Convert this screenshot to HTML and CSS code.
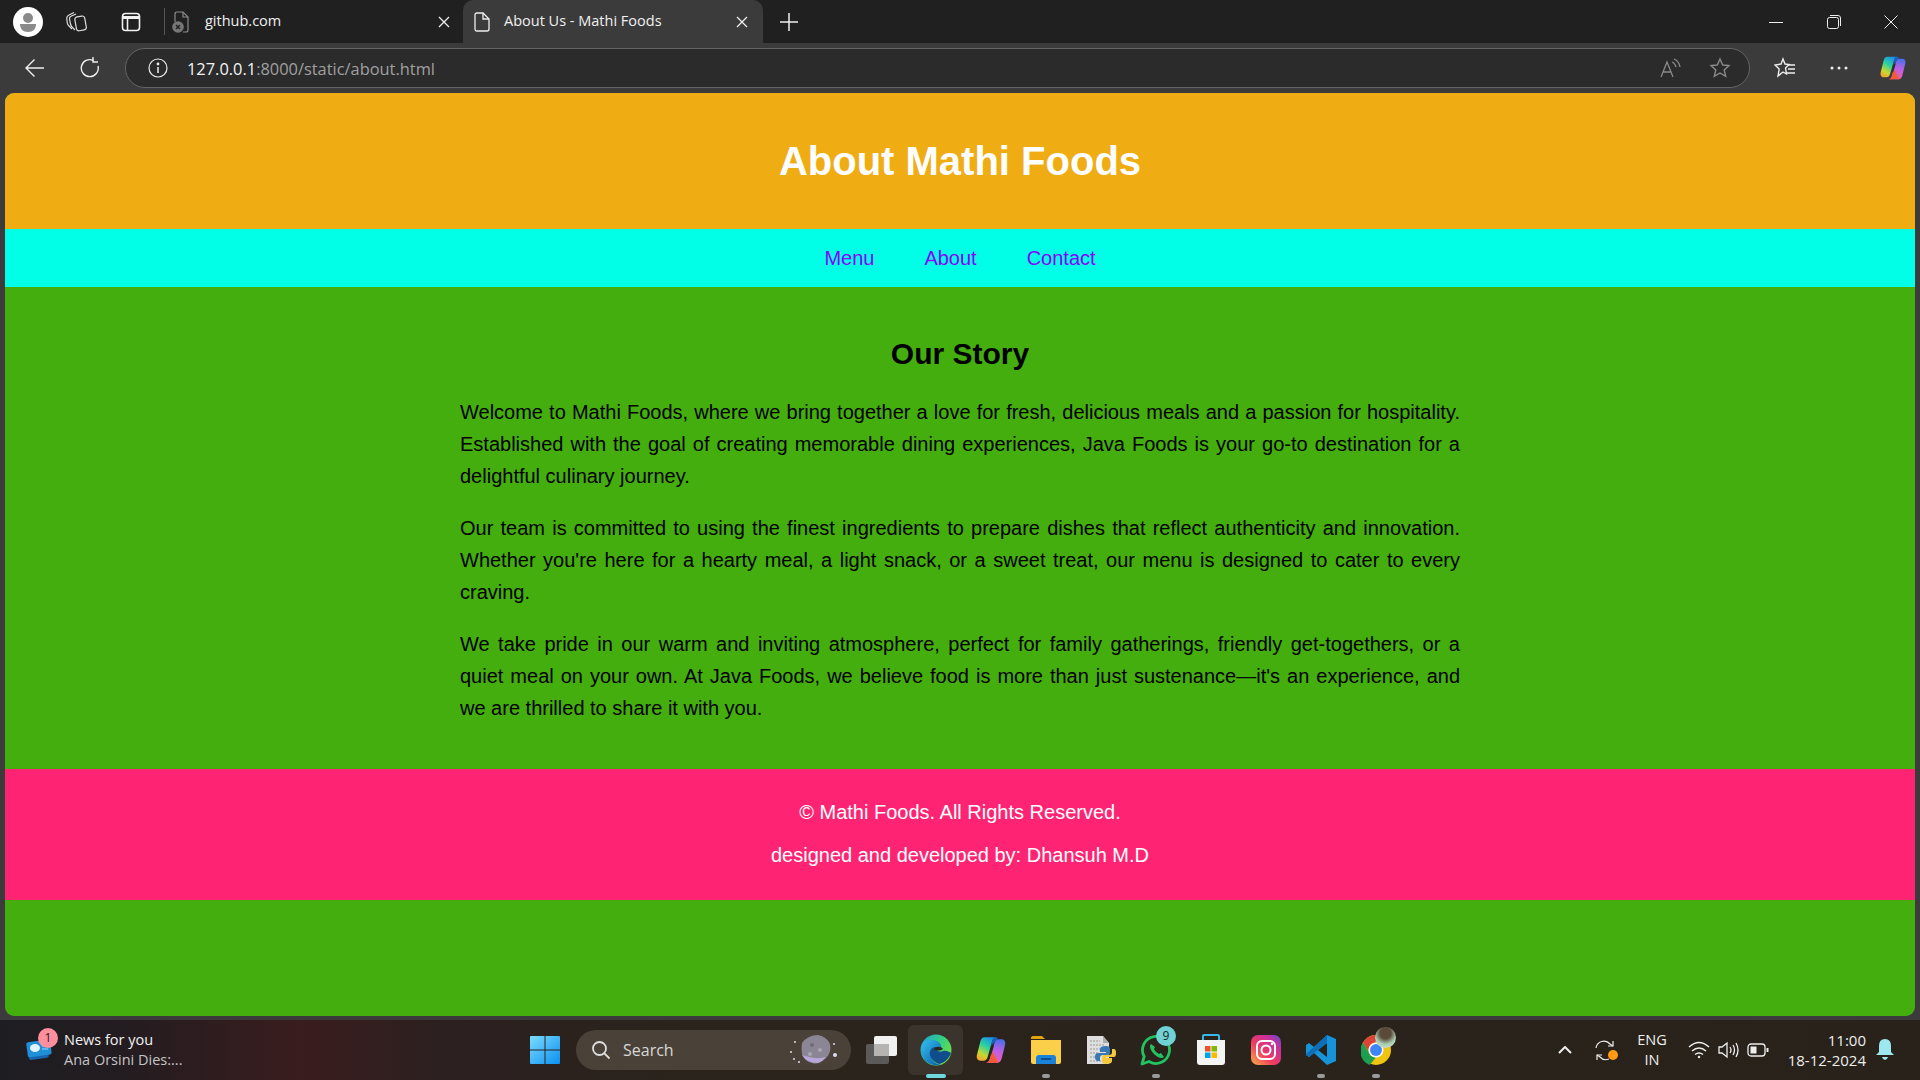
FILE: index.html
```html
<!DOCTYPE html>
<html>
<head>
    <title>About Us - Mathi Foods</title>
    <link rel="stylesheet" href="styles.css">
</head>
<body>
<div class="window">
    <div class="tabstrip">
        <div class="profile">
            <svg width="30" height="30" viewBox="0 0 30 30"><circle cx="15" cy="15" r="15" fill="#fff"/><circle cx="15" cy="11" r="5" fill="#8a8a8a"/><path d="M7 17h16c0 5-3 8-8 8s-8-3-8-8z" fill="#8a8a8a"/></svg>
        </div>
        <div class="strip-btn">
            <svg width="22" height="22" viewBox="0 0 22 22" fill="none" stroke="#ddd" stroke-width="1.200"><rect x="9.500" y="5.500" width="10" height="14" rx="2.500" transform="rotate(-10 14 12)"/><path d="M9 19 6 16q-1-1-1.500-3L3.500 8q-.3-2 1.500-2.800L10 3"/><path d="M6 18 2.500 14.500q-1-1-1.300-3L.8 7.500Q.6 5 3 4L8 1.500"/></svg>
        </div>
        <div class="strip-btn strip-btn-last">
            <svg width="20" height="20" viewBox="0 0 20 20" fill="none" stroke="#f2f2f2" stroke-width="1.600"><rect x="1.500" y="1.500" width="17" height="17" rx="3"/><path d="M1.500 5.500h17" stroke-width="3"/><path d="M6.500 6v12"/></svg>
        </div>
        <div class="tab">
            <svg class="tab-icon" width="18" height="24" viewBox="0 0 18 24" fill="none" stroke="#8b8b8b" stroke-width="1.200"><path d="M3 12V4q0-2 2-2h6l5 5v13q0 2-2 2h-3"/><path d="M11 2v5h5"/><circle cx="6" cy="17" r="5.800" fill="#777" stroke="none"/><path d="M4 15l4 4m0-4-4 4" stroke="#222" stroke-width="1.500"/></svg>
            <span class="tab-title">github.com</span>
            <svg class="tab-close" width="14" height="14" viewBox="0 0 14 14" stroke="#eee" stroke-width="1.300"><path d="M2 2l10 10M12 2 2 12"/></svg>
        </div>
        <div class="tab tab-active">
            <svg class="tab-icon" width="16" height="20" viewBox="0 0 16 20" fill="none" stroke="#eee" stroke-width="1.300"><path d="M1 3q0-2 2-2h6l6 6v10q0 2-2 2H3q-2 0-2-2z"/><path d="M9 1v6h6"/></svg>
            <span class="tab-title">About Us - Mathi Foods</span>
            <svg class="tab-close" width="14" height="14" viewBox="0 0 14 14" stroke="#eee" stroke-width="1.300"><path d="M2 2l10 10M12 2 2 12"/></svg>
        </div>
        <div class="new-tab">
            <svg width="18" height="18" viewBox="0 0 18 18" stroke="#eee" stroke-width="1.500"><path d="M9 0v18M0 9h18"/></svg>
        </div>
        <div class="win-controls">
            <div class="win-btn"><svg width="14" height="14" viewBox="0 0 14 14" stroke="#eee"><path d="M0 7.500h14"/></svg></div>
            <div class="win-btn"><svg width="14" height="14" viewBox="0 0 14 14" fill="none" stroke="#eee"><rect x=".5" y="2.500" width="11" height="11" rx="2"/><path d="M3 .5h8q2.500 0 2.500 2.500v8"/></svg></div>
            <div class="win-btn"><svg width="14" height="14" viewBox="0 0 14 14" stroke="#eee"><path d="M.5.5l13 13M13.500.5l-13 13"/></svg></div>
        </div>
    </div>

    <div class="toolbar">
        <div class="tool-btn">
            <svg width="20" height="20" viewBox="0 0 20 20" fill="none" stroke="#eee" stroke-width="1.400"><path d="M1 10h18M9.500 1.500 1 10l8.500 8.500"/></svg>
        </div>
        <div class="tool-btn tool-btn-gap">
            <svg width="20" height="22" viewBox="0 0 20 22" fill="none" stroke="#eee" stroke-width="1.400"><path d="M13.500 3.500A8.500 8.500 0 1 0 18 9"/><path d="M13 0v5h5"/></svg>
        </div>
        <div class="address">
            <svg class="info" width="20" height="20" viewBox="0 0 20 20" fill="none" stroke="#eee" stroke-width="1.200"><circle cx="10" cy="10" r="9"/><path d="M10 9v6" stroke-width="1.500"/><circle cx="10" cy="6" r=".8" fill="#eee"/></svg>
            <span class="url"><span class="url-host">127.0.0.1</span>:8000/static/about.html</span>
            <svg class="read-aloud" width="22" height="20" viewBox="0 0 22 20" fill="none" stroke="#8a8a8a" stroke-width="1.300"><path d="M1 19 7 4l6 15M3 14h8"/><path d="M12 4q3 1 4 5M14 1q5 2 6 8"/></svg>
            <svg class="fav-star" width="22" height="22" viewBox="0 0 22 22" fill="none" stroke="#8a8a8a" stroke-width="1.400"><path d="M11 2l2.700 6 6.300.6-4.800 4.300 1.500 6.500L11 16l-5.700 3.400 1.500-6.500L2 8.600 8.300 8z"/></svg>
        </div>
        <div class="tool-btn tool-btn-right">
            <svg width="22" height="22" viewBox="0 0 22 22" fill="none" stroke="#eee" stroke-width="1.400"><path d="M9 2l2 5 4 .5-3.500 3.500 1 6L9 15l-5 4 1.200-7L1 8l6-1z"/><path d="M14 8h7M14 12h7M13 16h8"/></svg>
        </div>
        <div class="tool-btn tool-btn-tight">
            <svg width="20" height="4" viewBox="0 0 20 4" fill="#eee"><circle cx="3" cy="2" r="1.500"/><circle cx="10" cy="2" r="1.500"/><circle cx="17" cy="2" r="1.500"/></svg>
        </div>
        <div class="tool-btn tool-btn-tight">
            <svg width="28" height="28" viewBox="0 0 30 30"><defs><linearGradient id="cp1" x1=".7" y1="0" x2=".2" y2="1"><stop offset="0" stop-color="#1a8fe8"/><stop offset=".4" stop-color="#2ad2a0"/><stop offset=".75" stop-color="#c8d830"/><stop offset="1" stop-color="#f5a030"/></linearGradient><linearGradient id="cp2" x1=".6" y1="0" x2=".4" y2="1"><stop offset="0" stop-color="#4a6fe8"/><stop offset=".45" stop-color="#b85fe6"/><stop offset="1" stop-color="#ee5fa8"/></linearGradient></defs><path d="M9 3h11c-2 0-3 1-4 4l-4 14c-1 3-2 4-4 4H5c-3 0-4-3-3-6l3-12c1-3 2-4 4-4z" fill="url(#cp1)"/><path d="M21 27H10c2 0 3-1 4-4l4-14c1-3 2-4 4-4h3c3 0 4 3 3 6l-3 12c-1 3-2 4-4 4z" fill="url(#cp2)"/><path d="M10 27c2 0 3-1 4-4l2-7 6 11z" fill="#f25a3a"/><path d="M20 3c-2 0-3 1-4 4l-1 4 6-6h1z" fill="#1f5fc8"/><path d="M14.500 19l2.500-8" stroke="#2b2b2b" stroke-width="1.500"/></svg>
        </div>
    </div>

    <div class="page">
        <header class="site-header">
            <h1>About Mathi Foods</h1>
        </header>
        <nav class="site-nav">
            <a href="#">Menu</a>
            <a href="#">About</a>
            <a href="#">Contact</a>
        </nav>
        <main class="story">
            <h2>Our Story</h2>
            <p>Welcome to Mathi Foods, where we bring together a love for fresh, delicious meals and a passion for hospitality. Established with the goal of creating memorable dining experiences, Java Foods is your go-to destination for a delightful culinary journey.</p>
            <p>Our team is committed to using the finest ingredients to prepare dishes that reflect authenticity and innovation. Whether you're here for a hearty meal, a light snack, or a sweet treat, our menu is designed to cater to every craving.</p>
            <p>We take pride in our warm and inviting atmosphere, perfect for family gatherings, friendly get-togethers, or a quiet meal on your own. At Java Foods, we believe food is more than just sustenance&mdash;it's an experience, and we are thrilled to share it with you.</p>
        </main>
        <footer class="site-footer">
            <p>&copy; Mathi Foods. All Rights Reserved.</p>
            <p>designed and developed by: Dhansuh M.D</p>
        </footer>
    </div>

    <div class="taskbar">
        <div class="news">
            <div class="news-icon">
                <svg width="28" height="26" viewBox="0 0 28 26"><rect x="3" y="7" width="20" height="15" rx="2" fill="#1565b0" transform="rotate(-8 13 14)"/><rect x="2" y="4" width="24" height="15" rx="2" fill="#1f8fd8" transform="rotate(-8 13 12)"/><ellipse cx="10" cy="11" rx="5" ry="4" fill="#e4f4ff"/><path d="M17 9h6M17 12h6" stroke="#9fdcf5"/></svg>
                <span class="news-badge">1</span>
            </div>
            <div class="news-text">
                <span class="news-title">News for you</span>
                <span class="news-sub">Ana Orsini Dies:...</span>
            </div>
        </div>
        <div class="start">
            <svg width="30" height="30" viewBox="0 0 30 30"><defs><linearGradient id="win" x1="0" y1="0" x2="1" y2="1"><stop offset="0" stop-color="#7cdcff"/><stop offset="1" stop-color="#0a90f0"/></linearGradient></defs><path d="M1 1h13.500v13.500H0V2q0-1 1-1zM15.500 1H29q1 0 1 1v12.500H15.500zM0 15.500h14.500V29H1q-1 0-1-1zM15.500 15.500H30V28q0 1-1 1H15.500z" fill="url(#win)"/></svg>
        </div>
        <div class="search">
            <svg width="20" height="20" viewBox="0 0 20 20" fill="none" stroke="#ddd" stroke-width="1.800"><circle cx="8.500" cy="8.500" r="6.500"/><path d="M13 13l5.500 5.500"/></svg>
            <span class="search-label">Search</span>
            <svg class="search-art" width="50" height="34" viewBox="0 0 50 34"><path d="M14 10q6-8 16-8 9 2 12 9 2 9-5 15-7 6-13 4-8-2-10-9-1-6 0-11z" fill="#8b8694"/><path d="M14 22q5 8 16 8 5-2 8-6-10 3-24-2z" fill="#b9a6dc"/><circle cx="24" cy="12" r="2" fill="#6f6b78"/><circle cx="32" cy="17" r="2" fill="#a9a5b2"/><circle cx="22" cy="21" r="2" fill="#a9a5b2"/><g fill="#dde"><circle cx="3" cy="19" r="1"/><circle cx="7" cy="9" r="1"/><circle cx="6" cy="26" r="1"/><circle cx="46" cy="11" r="1"/><circle cx="47" cy="22" r="2"/><circle cx="11" cy="29" r="1"/></g></svg>
        </div>
        <div class="apps">
            <div class="app">
                <svg width="32" height="30" viewBox="0 0 32 30"><rect x="1" y="9" width="23" height="20" rx="2" fill="#5c5a58"/><rect x="9" y="1" width="23" height="20" rx="2" fill="#f1f1f1"/><rect x="9" y="9" width="15" height="12" fill="#b5b4b2"/></svg>
            </div>
            <div class="app app-active">
                <svg width="32" height="32" viewBox="0 0 32 32"><defs><linearGradient id="edge1" x1="0" y1="0" x2="1" y2="1"><stop offset="0" stop-color="#35c1f1"/><stop offset="1" stop-color="#0c59a4"/></linearGradient><linearGradient id="edge2" x1="0" y1="0" x2="1" y2=".6"><stop offset="0" stop-color="#1b9de2"/><stop offset=".6" stop-color="#36d17c"/><stop offset="1" stop-color="#6fdc4c"/></linearGradient></defs><circle cx="16" cy="16" r="15.500" fill="url(#edge2)"/><path d="M1 16C1 9 7 5 13 6c7 1 10 6 7 9-2 2-6 1-6-1-4 1-5 6-3 10 1 3 5 6 10 7-11 2-20-5-20-15z" fill="url(#edge1)"/><path d="M11 24c-3-6 0-12 6-11-2 3 2 6 6 4 3-1 6 1 8 2-2 6-7 10-12 11-3-1-6-3-8-6z" fill="#0f4d8c"/><path d="M14 15c2-3 7-3 9 0-3 2-7 2-9 0z" fill="#2b2620"/></svg>
                <span class="indicator indicator-active"></span>
            </div>
            <div class="app">
                <svg width="32" height="32" viewBox="0 0 30 30"><defs><linearGradient id="cp3" x1=".7" y1="0" x2=".2" y2="1"><stop offset="0" stop-color="#1a8fe8"/><stop offset=".4" stop-color="#2ad2a0"/><stop offset=".75" stop-color="#c8d830"/><stop offset="1" stop-color="#f5a030"/></linearGradient><linearGradient id="cp4" x1=".6" y1="0" x2=".4" y2="1"><stop offset="0" stop-color="#4a6fe8"/><stop offset=".45" stop-color="#b85fe6"/><stop offset="1" stop-color="#ee5fa8"/></linearGradient></defs><path d="M9 3h11c-2 0-3 1-4 4l-4 14c-1 3-2 4-4 4H5c-3 0-4-3-3-6l3-12c1-3 2-4 4-4z" fill="url(#cp3)"/><path d="M21 27H10c2 0 3-1 4-4l4-14c1-3 2-4 4-4h3c3 0 4 3 3 6l-3 12c-1 3-2 4-4 4z" fill="url(#cp4)"/><path d="M10 27c2 0 3-1 4-4l2-7 6 11z" fill="#f25a3a"/><path d="M20 3c-2 0-3 1-4 4l-1 4 6-6h1z" fill="#1f5fc8"/><path d="M14.500 19l2.500-8" stroke="#2b2620" stroke-width="1.500"/></svg>
            </div>
            <div class="app">
                <svg width="30" height="28" viewBox="0 0 30 28"><path d="M0 2q0-2 2-2h9l3 3H0z" fill="#e0a30a"/><path d="M0 4h30v22q0 2-2 2H2q-2 0-2-2z" fill="#fbcf4a"/><path d="M5 22q0-3 3-3h14q3 0 3 3v6H5z" fill="#1a82d8"/><path d="M10 23h10" stroke="#0c3f7a" stroke-width="1.500"/></svg>
                <span class="indicator"></span>
            </div>
            <div class="app">
                <svg width="30" height="30" viewBox="0 0 30 30"><path d="M1 1h16l6 7v21H1z" fill="#dedede"/><path d="M17 1v7h6z" fill="#aaa"/><path d="M4 6h10M4 10h14M4 14h12M4 18h9M4 22h10M4 26h14" stroke="#999" stroke-dasharray="2 1"/><path d="M20 11q-6 0-6 3v3h6v1h-8q-3 0-3 4t3 4h2v-3q0-3 3-3h5q2 0 2-2v-4q0-3-4-3z" fill="#3a78b5"/><path d="M20 29q6 0 6-3v-3h-6v-1h8q2 0 2-4t-2-4h-2v3q0 3-3 3h-5q-2 0-2 2v4q0 3 4 3z" fill="#f5c93d"/></svg>
            </div>
            <div class="app">
                <svg width="32" height="32" viewBox="0 0 32 32" fill="none"><path d="M2 30l2.200-7.500A13.500 13.500 0 1 1 9 27.500z" stroke="#22c25f" stroke-width="2.800" stroke-linejoin="round"/><path d="M11 10c-2 2-1 6 3 10s8 5 10 3l-3-4-2 1c-2-1-4-3-5-5l1-2z" fill="#22c25f"/></svg>
                <span class="app-badge">9</span>
                <span class="indicator"></span>
            </div>
            <div class="app">
                <svg width="30" height="32" viewBox="0 0 30 32"><path d="M7 6V2q0-1 1-1h14q1 0 1 1v4" fill="none" stroke="#36b7e8" stroke-width="2"/><path d="M1 6h28v22q0 3-3 3H4q-3 0-3-3z" fill="#f4f4f4"/><rect x="9" y="12" width="5.500" height="5.500" fill="#f25022"/><rect x="15.500" y="12" width="5.500" height="5.500" fill="#7fba00"/><rect x="9" y="18.500" width="5.500" height="5.500" fill="#00a4ef"/><rect x="15.500" y="18.500" width="5.500" height="5.500" fill="#ffb900"/></svg>
            </div>
            <div class="app">
                <svg width="30" height="30" viewBox="0 0 30 30" fill="none"><defs><linearGradient id="ig" x1="0" y1="1" x2="1" y2="0"><stop offset="0" stop-color="#fdb24a"/><stop offset=".4" stop-color="#ef3b5e"/><stop offset=".75" stop-color="#c7309f"/><stop offset="1" stop-color="#5b4fd0"/></linearGradient></defs><rect width="30" height="30" rx="7" fill="url(#ig)"/><rect x="6" y="6" width="18" height="18" rx="5" stroke="#fff" stroke-width="2"/><circle cx="15" cy="15" r="4.500" stroke="#fff" stroke-width="2"/><circle cx="21" cy="9" r="1.300" fill="#fff"/></svg>
            </div>
            <div class="app">
                <svg width="30" height="30" viewBox="0 0 30 30"><path d="M21 0l9 4v22l-9 4-13-12-5 4-3-2v-10l3-2 5 4z" fill="#1794d8"/><path d="M21 8 12 15l9 7z" fill="#262119"/><path d="M21 0v8L3 22l-3-2 0-1z" fill="#0d6fb8"/></svg>
                <span class="indicator"></span>
            </div>
            <div class="app">
                <svg width="30" height="30" viewBox="0 0 30 30"><circle cx="15" cy="15" r="15" fill="#f1c40f"/><path d="M15 0a15 15 0 0 1 13 7.500H15a7.500 7.500 0 0 0-6.500 11.250L2 7.500A15 15 0 0 1 15 0z" fill="#dc4437"/><path d="M2 7.500l6.500 11.250A7.500 7.500 0 0 0 15 22.500L8.500 30A15 15 0 0 1 2 7.500z" fill="#1e9e50"/><circle cx="15" cy="15" r="7.500" fill="#fff"/><circle cx="15" cy="15" r="6" fill="#3f85f4"/></svg>
                <span class="chrome-avatar"></span>
                <span class="indicator"></span>
            </div>
        </div>
        <div class="tray">
            <svg class="tray-chevron" width="14" height="8" viewBox="0 0 14 8" fill="none" stroke="#eee" stroke-width="2"><path d="M1 7l6-6 6 6"/></svg>
            <div class="tray-sync">
                <svg width="22" height="22" viewBox="0 0 22 22" fill="none" stroke="#eee" stroke-width="1.200"><path d="M2 9a8 8 0 0 1 14-4l3 2"/><path d="M19 2v5h-5"/><path d="M15 20a8 8 0 0 1-9-2L3 16"/><path d="M3 21v-5h5"/></svg>
                <span class="sync-dot"></span>
            </div>
            <div class="tray-lang"><span>ENG</span><span>IN</span></div>
            <svg class="tray-icon tray-wifi" width="22" height="18" viewBox="0 0 22 18" fill="none" stroke="#eee" stroke-width="1.500"><path d="M1 6q10-9 20 0M4 10q7-6 14 0M7 13.500q4-3 8 0"/><circle cx="11" cy="16" r="1.200" fill="#eee" stroke="none"/></svg>
            <svg class="tray-icon tray-vol" width="22" height="18" viewBox="0 0 22 18" fill="none" stroke="#eee" stroke-width="1.300"><path d="M1 6h3l5-4v14l-5-4H1z"/><path d="M12 6q2 3 0 6M15 4q3 5 0 10M18 2q4 7 0 14"/></svg>
            <svg class="tray-icon tray-batt" width="22" height="14" viewBox="0 0 22 14" fill="none" stroke="#eee" stroke-width="1.300"><rect x="1" y="1" width="17" height="12" rx="3"/><rect x="3.500" y="3.500" width="6" height="7" fill="#eee" stroke="none"/><path d="M20.500 5v4" stroke-width="2"/></svg>
            <div class="clock"><span>11:00</span><span>18-12-2024</span></div>
            <svg class="tray-bell" width="18" height="22" viewBox="0 0 18 22" fill="#9ce8ee"><path d="M9 0q6 0 6 7v6l3 3H0l3-3V7q0-7 6-7z"/><path d="M6 18h6q-1 3-3 3t-3-3z"/></svg>
        </div>
    </div>
</div>
</body>
</html>
```

FILE: styles.css
```css
html, body { margin: 0; height: 100%; overflow: hidden; }
body { font-family: "Liberation Sans", Arial, sans-serif; background: #3b3b3b; }
svg { display: block; flex: none; }

.window { display: flex; flex-direction: column; height: 1080px; }

/* browser tab strip */
.tabstrip { display: flex; align-items: stretch; height: 43px; background: #202020; font-family: "Open Sans", sans-serif; font-size: 14.5px; color: #f0f0f0; }
.profile { width: 56px; display: flex; align-items: center; justify-content: center; }
.strip-btn { width: 42px; display: flex; align-items: center; justify-content: center; }
.strip-btn-last { width: 66px; }
.tab { position: relative; width: 299px; display: flex; align-items: center; padding-left: 8px; padding-right: 12px; box-sizing: border-box; }
.tab::before { content: ""; position: absolute; left: 0; top: 8px; bottom: 8px; border-left: 1px solid #555; }
.tab-icon { margin-right: 15px; }
.tab-title { margin-top: -2px; }
.tab-close { margin-left: auto; }
.tab-active { width: 300px; background: #3b3b3b; border-radius: 10px 10px 0 0; padding-left: 11px; padding-right: 14px; }
.tab-active::before { display: none; }
.tab-active .tab-icon { margin-right: 14px; }
.new-tab { display: flex; align-items: center; margin-left: 17px; }
.win-controls { margin-left: auto; display: flex; }
.win-btn { width: 57.5px; display: flex; align-items: center; justify-content: center; }

/* browser toolbar */
.toolbar { display: flex; align-items: center; height: 50px; padding: 0 3px 0 11px; background: #3b3b3b; }
.tool-btn { width: 48px; height: 38px; display: flex; align-items: center; justify-content: center; }
.tool-btn-gap { margin-left: 7px; margin-right: 11px; }
.tool-btn-right { margin-left: 11px; }
.tool-btn-tight { margin-left: 6px; }
.address { flex: 1; height: 38px; display: flex; align-items: center; padding-left: 22px; padding-right: 18px; background: #2b2b2b; border: 1px solid #646464; border-radius: 20px; font-family: "Open Sans", sans-serif; font-size: 16.4px; color: #a0a0a0; }
.info { margin-right: 19px; }
.url-host { color: #f4f4f4; }
.read-aloud { margin-left: auto; margin-right: 27px; }

/* the page itself */
.page { flex: 1; margin: 0 5px 4px; background: #44ae0e; border-radius: 9px; overflow: hidden; font-size: 20px; }
.site-header { background: #f0ac13; color: #fff; padding: 45px 0; text-align: center; }
.site-header h1 { margin: 0; font-size: 40px; line-height: 46px; }
.site-nav { background: #00ffe6; display: flex; justify-content: center; gap: 50px; padding: 13px 0; line-height: 32px; }
.site-nav a { color: #8a00ff; text-decoration: none; }
.story { width: 1000px; margin: 0 auto; padding: 43px 0 25px; line-height: 32px; }
.story h2 { margin: 0 0 18px; font-size: 30px; line-height: 48px; text-align: center; }
.story p { margin: 0 0 20px; text-align: justify; }
.site-footer { background: #ff2473; color: #fff; padding: 27px 0 29px; text-align: center; line-height: 32px; }
.site-footer p { margin: 0; }
.site-footer p + p { margin-top: 11px; }

/* windows taskbar */
.taskbar { display: flex; align-items: center; height: 60px; background: linear-gradient(90deg, #1e1e22 0, #231c20 120px, #3a1d1e 300px, #2c2020 450px, #2a241c 700px, #28221a 100%); font-family: "Open Sans", sans-serif; color: #eee; }
.news { width: 520px; display: flex; align-items: center; padding-left: 25px; box-sizing: border-box; }
.news-icon { position: relative; width: 28px; height: 26px; margin-right: 11px; }
.news-badge { position: absolute; left: 13px; top: -9px; width: 20px; height: 20px; border-radius: 50%; background: #ff8f9c; color: #222; font-size: 12px; line-height: 20px; text-align: center; }
.news-text { display: flex; flex-direction: column; font-size: 14.5px; line-height: 20px; }
.news-title { color: #f2f2f2; }
.news-sub { color: #c4c4c4; }
.start { width: 50px; display: flex; justify-content: center; }
.search { width: 275px; height: 40px; margin-left: 6px; display: flex; align-items: center; padding-left: 15px; box-sizing: border-box; background: #4a4239; border-radius: 20px; font-size: 16px; color: #d8d8d8; }
.search-label { margin-left: 12px; }
.search-art { margin-left: auto; margin-right: 13px; }
.apps { display: flex; margin-left: 2px; }
.app { position: relative; width: 55px; height: 50px; display: flex; align-items: center; justify-content: center; box-sizing: border-box; }
.app-active { background: #3a342c; border-radius: 6px; }
.indicator { position: absolute; bottom: -3px; left: 50%; width: 8px; height: 4px; margin-left: -4px; border-radius: 2px; background: #9a9a9a; }
.indicator-active { width: 20px; margin-left: -10px; background: #6fd8e0; }
.app-badge { position: absolute; left: 28px; top: 1px; width: 20px; height: 20px; border-radius: 50%; background: #6fd3d6; color: #222; font-size: 12px; line-height: 20px; text-align: center; }
.chrome-avatar { position: absolute; left: 27px; top: 2px; width: 21px; height: 21px; border-radius: 50%; background: radial-gradient(circle at 50% 30%, #5a4a3a 30%, #a8cdb0 60%, #dfe8dc); }

.tray { margin-left: auto; display: flex; align-items: center; padding-right: 26px; }
.tray-chevron { margin-right: 22px; }
.tray-sync { position: relative; width: 22px; height: 22px; margin-right: 16px; }
.sync-dot { position: absolute; right: -2px; bottom: 1px; width: 10px; height: 10px; border-radius: 50%; background: #ff9a14; }
.tray-lang { width: 40px; display: flex; flex-direction: column; align-items: center; font-size: 14.5px; line-height: 20px; margin-right: 16px; }
.tray-wifi { margin-right: 8px; }
.tray-vol { margin-right: 7px; }
.clock { width: 80px; margin-left: 17px; margin-right: 8px; display: flex; flex-direction: column; align-items: flex-end; font-size: 15px; line-height: 20px; white-space: nowrap; }
.tray-bell { margin-left: 2px; }
```
